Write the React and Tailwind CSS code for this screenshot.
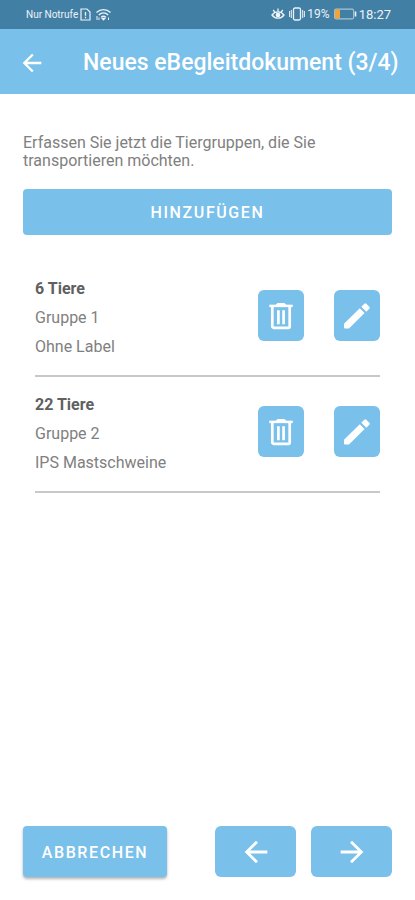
const groups = [
  { id: 1, count: "6 Tiere", name: "Gruppe 1", label: "Ohne Label" },
  { id: 2, count: "22 Tiere", name: "Gruppe 2", label: "IPS Mastschweine" },
];

function BackIcon({ className }) {
  return (
    <svg viewBox="0 0 24 24" fill="currentColor" className={className} aria-hidden="true">
      <path d="M20 11H7.83l5.59-5.59L12 4l-8 8 8 8 1.41-1.41L7.83 13H20v-2z" />
    </svg>
  );
}

function ForwardIcon({ className }) {
  return (
    <svg viewBox="0 0 24 24" fill="currentColor" className={className} aria-hidden="true">
      <path d="M12 4l-1.41 1.41L16.17 11H4v2h12.17l-5.58 5.59L12 20l8-8-8-8z" />
    </svg>
  );
}

function TrashIcon() {
  return (
    <svg viewBox="0 0 24 28" fill="none" stroke="currentColor" className="w-6 h-7" aria-hidden="true">
      <path d="M0.3 3.9h23.4" strokeWidth="2.5" />
      <path d="M6.5 3.2L8.5 1h7l2 2.2z" fill="currentColor" stroke="none" />
      <path d="M3.3 4.5v20a1.3 1.3 0 0 0 1.3 1.3h14.8a1.3 1.3 0 0 0 1.3-1.3v-20" strokeWidth="2.7" />
      <path d="M9.4 8.2v14M14.6 8.2v14" strokeWidth="2.7" />
    </svg>
  );
}

function PencilIcon() {
  return (
    <svg viewBox="0 0 28 28" fill="currentColor" className="size-7" aria-hidden="true">
      <path d="M1 21.8L16.8 6.2l4.8 4.8L6 26.6H2a1 1 0 0 1-1-1z" />
      <path d="M18.3 4.8l3-3a1.4 1.4 0 0 1 2 0l3 3a1.4 1.4 0 0 1 0 2l-3 3z" />
    </svg>
  );
}

function StatusBar() {
  return (
    <div className="h-[29px] shrink-0 bg-[#427fa5] text-white/90 flex items-center justify-between pl-[26px] pr-6">
      <div className="flex items-center gap-0.5">
        <span className="text-[10px]">Nur Notrufe</span>
        {/* SIM */}
        <svg viewBox="0 0 11 13" fill="none" stroke="currentColor" className="w-[11px] h-[13px]">
          <path d="M1 1h6l3 3v8H1z" strokeWidth="1.2" />
          <path d="M5.5 4v3.8M5.5 8.8v1.4" strokeWidth="1.3" />
        </svg>
        {/* Wifi */}
        <svg viewBox="0 0 17 13" fill="none" stroke="currentColor" strokeWidth="1.3" className="w-[17px] h-[13px] ml-0.5">
          <path d="M1.5 4.5C5.5 0.6 11.5 0.6 15.5 4.5M3.8 7c2.8-2.7 6.6-2.7 9.4 0M6.2 9.2c1.4-1.2 3.2-1.2 4.6 0" />
          <path d="M7.2 10.3h2.6L8.5 11.8z" fill="currentColor" />
          <path d="M2 8v4M4 9.5V12M13.5 9.5V12" strokeWidth="1" />
        </svg>
      </div>

      <div className="flex items-center text-xs">
        {/* Eye comfort */}
        <svg viewBox="0 0 14 12" fill="none" stroke="currentColor" strokeWidth="1.3" className="w-[14px] h-3">
          <path d="M1 7c3-4.2 9-4.2 12 0-3 4.2-9 4.2-12 0z" />
          <circle cx="7" cy="7" r="1.7" fill="currentColor" />
          <path d="M7 0.5v3M2.2 2l1.6 2.2M11.8 2l-1.6 2.2" />
        </svg>
        {/* Vibration */}
        <svg viewBox="0 0 16 14" fill="none" stroke="currentColor" strokeWidth="1.3" className="w-4 h-[14px] ml-1 mr-0.5">
          <rect x="4.5" y="1" width="7" height="12" rx="1.5" />
          <path d="M2.3 3v8M13.7 3v8M0.6 4v6M15.4 4v6" strokeWidth="1" />
        </svg>
        <span>19%</span>
        {/* Battery */}
        <svg viewBox="0 0 23 12" fill="none" className="w-[23px] h-3 ml-1 mr-0.5">
          <rect x="0.6" y="1.1" width="19" height="9.8" rx="1.5" stroke="#a9c3d3" strokeWidth="1.1" />
          <rect x="1" y="1.5" width="5" height="9" rx="1" fill="#f0a336" />
          <path d="M21.5 3.5v5" stroke="currentColor" strokeWidth="1.6" />
        </svg>
        <span className="text-[13px]">18:27</span>
      </div>
    </div>
  );
}

function GroupRow({ group }) {
  return (
    <li className="flex items-start justify-between border-b-2 border-[#c8c8c8] pb-[14px] mb-[13px]">
      <div className="leading-[29px]">
        <p className="font-bold text-[#606060]">{group.count}</p>
        <p>{group.name}</p>
        <p>{group.label}</p>
      </div>
      <div className="flex gap-[30px] pt-4 text-white">
        <button aria-label="Löschen" className="w-[46px] h-[51px] rounded-md bg-[#79c0eb] flex items-center justify-center">
          <TrashIcon />
        </button>
        <button aria-label="Bearbeiten" className="w-[46px] h-[51px] rounded-md bg-[#79c0eb] flex items-center justify-center">
          <PencilIcon />
        </button>
      </div>
    </li>
  );
}

export default function App() {
  return (
    <div className="min-h-screen flex flex-col bg-white font-[Roboto,sans-serif] text-base text-[#808080]">
      <StatusBar />

      {/* Header */}
      <header className="h-[65px] shrink-0 bg-[#79c0eb] text-white flex items-center pl-[18px] pr-4 pt-0.5">
        <button aria-label="Zurück">
          <BackIcon className="size-7" />
        </button>
        <h1 className="ml-[37px] pt-0.5 text-[23px] font-medium whitespace-nowrap">
          Neues eBegleitdokument (3/4)
        </h1>
      </header>

      <main className="flex-1 flex flex-col px-[23px] pt-10">
        <p className="leading-[18px]">
          Erfassen Sie jetzt die Tiergruppen, die Sie transportieren möchten.
        </p>

        <button className="mt-[19px] pt-0.5 h-[46px] w-full rounded bg-[#79c0eb] text-white font-medium tracking-widest">
          HINZUFÜGEN
        </button>

        <ul className="mt-[39px] px-3">
          {groups.map((group) => (
            <GroupRow key={group.id} group={group} />
          ))}
        </ul>
      </main>

      {/* Footer buttons */}
      <footer className="flex items-center px-[23px] pb-[23px] text-white">
        <button className="h-[51px] w-36 pt-0.5 rounded bg-[#79c0eb] font-medium tracking-widest shadow-[0_2px_3px_rgba(0,0,0,0.3)]">
          ABBRECHEN
        </button>
        <button aria-label="Zurück" className="ml-auto w-[81px] h-[51px] rounded-md bg-[#79c0eb] flex items-center justify-center">
          <BackIcon className="size-[34px]" />
        </button>
        <button aria-label="Weiter" className="ml-[15px] w-[81px] h-[51px] rounded-md bg-[#79c0eb] flex items-center justify-center">
          <ForwardIcon className="size-[34px]" />
        </button>
      </footer>
    </div>
  );
}
